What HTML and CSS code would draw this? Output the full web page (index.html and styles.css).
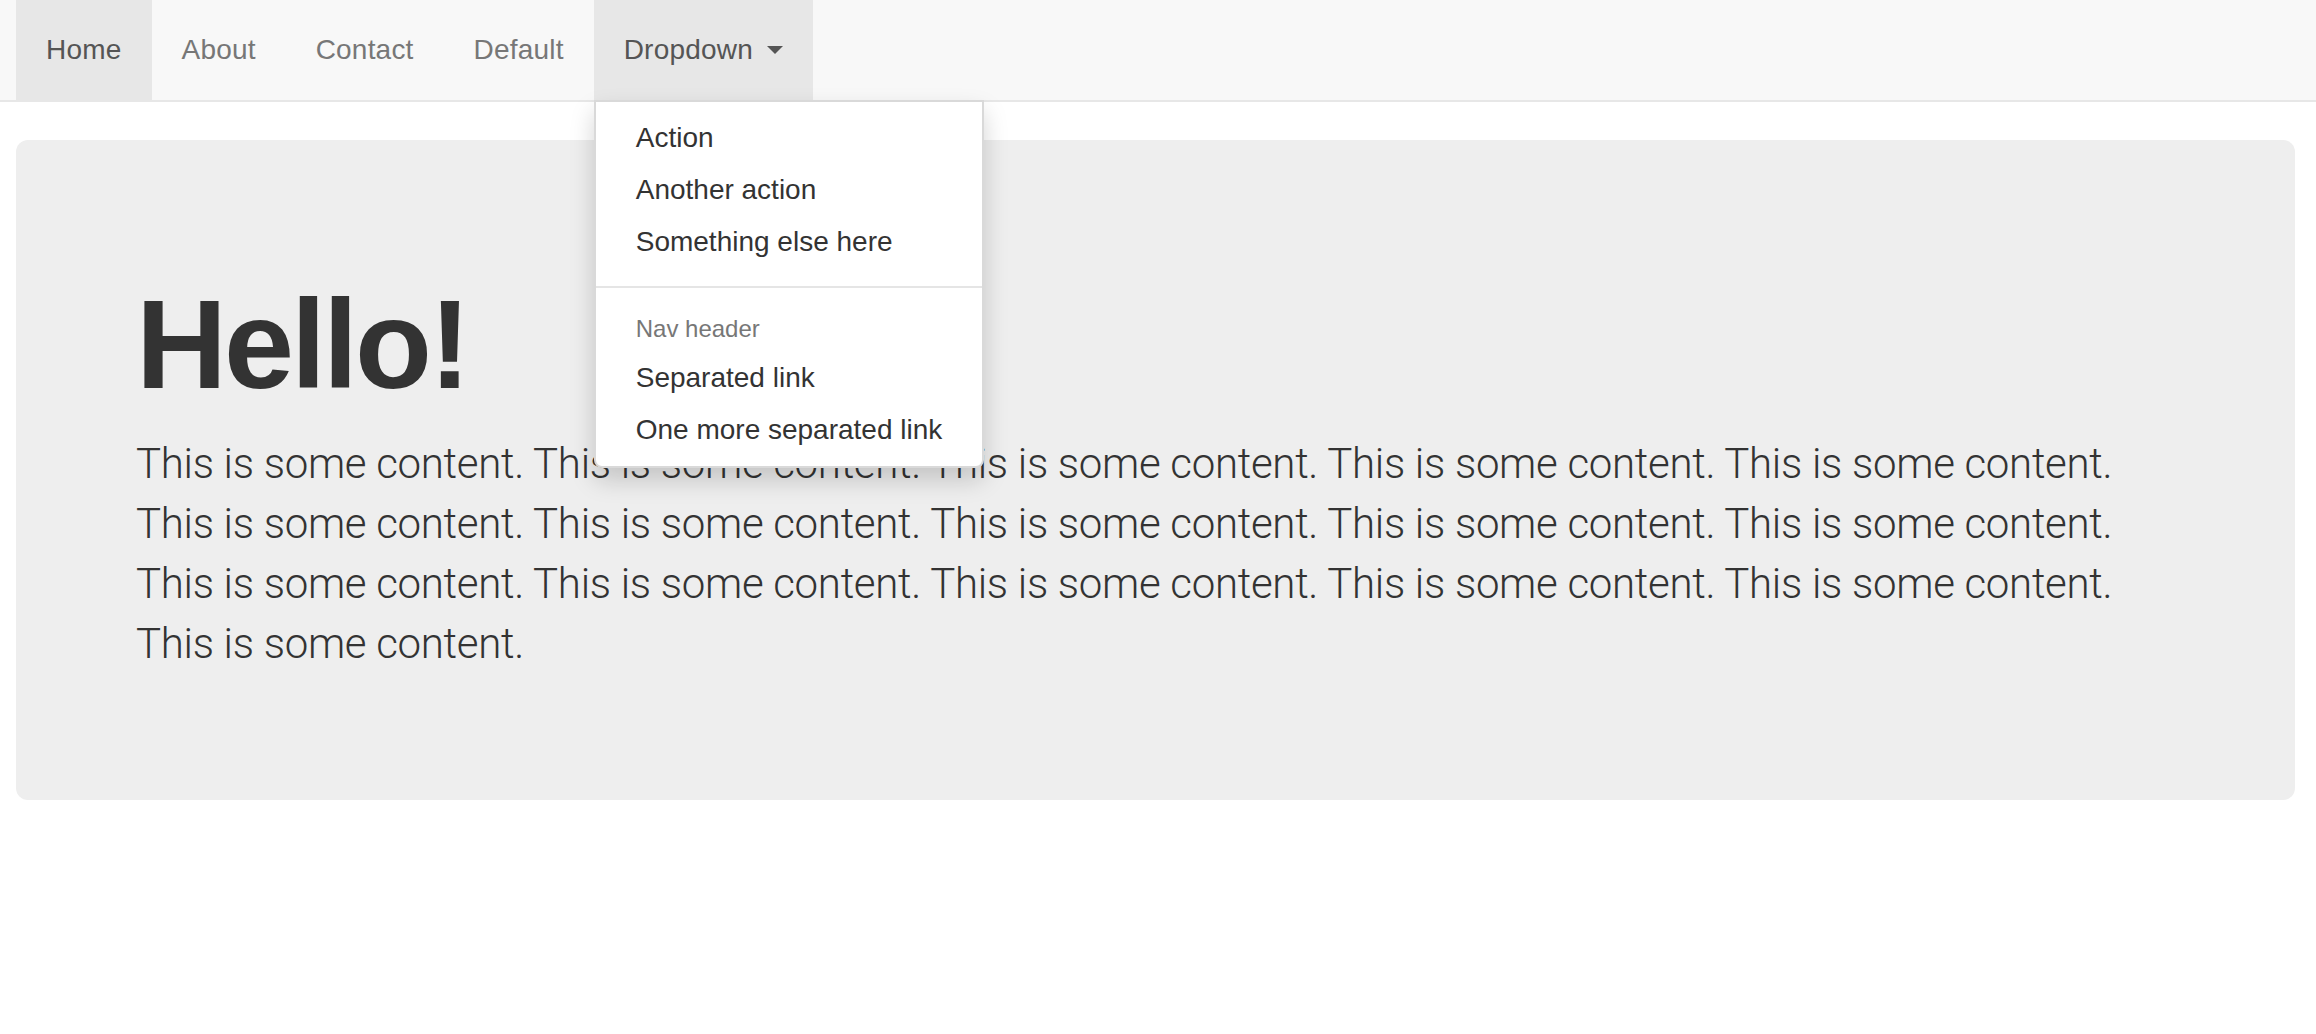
FILE: index.html
```html
<!DOCTYPE html>
<html lang="en">
<head>
<meta charset="utf-8">
<title>Hello</title>
<link rel="stylesheet" href="styles.css">
</head>
<body>
<nav class="navbar">
  <ul class="nav">
    <li class="nav-item active"><a href="#">Home</a></li>
    <li class="nav-item"><a href="#">About</a></li>
    <li class="nav-item"><a href="#">Contact</a></li>
    <li class="nav-item"><a href="#">Default</a></li>
    <li class="nav-item dropdown open">
      <a href="#">Dropdown <span class="caret"></span></a>
      <ul class="dropdown-menu">
        <li><a href="#">Action</a></li>
        <li><a href="#">Another action</a></li>
        <li><a href="#">Something else here</a></li>
        <li class="divider"></li>
        <li class="dropdown-header">Nav header</li>
        <li><a href="#">Separated link</a></li>
        <li><a href="#">One more separated link</a></li>
      </ul>
    </li>
  </ul>
</nav>
<div class="jumbotron">
  <h1>Hello!</h1>
  <p>This is some content. This is some content. This is some content. This is some content. This is some content. This is some content. This is some content. This is some content. This is some content. This is some content. This is some content. This is some content. This is some content. This is some content. This is some content. This is some content.</p>
</div>
</body>
</html>
```
FILE: styles.css
```css
* { box-sizing: border-box; }
html, body {
  margin: 0;
  padding: 0;
  background: #fff;
}
body {
  font-family: "Liberation Sans", Arial, Helvetica, sans-serif;
  color: #333;
  font-size: 28px;
  line-height: 40px;
}
a { text-decoration: none; }

.navbar {
  background: #f8f8f8;
  border-bottom: 2px solid #e7e7e7;
  padding: 0 16px;
  margin-bottom: 38px;
}
.nav {
  list-style: none;
  margin: 0;
  padding: 0;
  display: flex;
}
.nav-item { position: relative; }
.nav-item > a {
  display: block;
  padding: 30px 30px;
  line-height: 40px;
  font-size: 28px;
  letter-spacing: 0.2px;
  color: #777;
}
.nav-item.active > a,
.nav-item.open > a {
  background: #e7e7e7;
  color: #555;
}
.caret {
  display: inline-block;
  width: 0;
  height: 0;
  margin-left: 6px;
  vertical-align: middle;
  border-top: 8px solid #555;
  border-left: 8px solid transparent;
  border-right: 8px solid transparent;
  position: relative;
  top: -2px;
}
.dropdown-menu {
  position: absolute;
  top: 100%;
  left: 0;
  z-index: 10;
  list-style: none;
  margin: 0;
  padding: 10px 0;
  min-width: 320px;
  background: #fff;
  border: 2px solid rgba(0,0,0,.15);
  border-radius: 0 0 8px 8px;
  box-shadow: 0 12px 24px rgba(0,0,0,.175);
  white-space: nowrap;
}
.dropdown-menu li a {
  display: block;
  padding: 6px 40px;
  line-height: 40px;
  font-size: 28px;
  color: #333;
}
.dropdown-menu .divider {
  height: 2px;
  margin: 18px 0;
  background: #e5e5e5;
}
.dropdown-menu .dropdown-header {
  display: block;
  padding: 6px 40px;
  font-size: 24px;
  line-height: 34px;
  color: #777;
}

.jumbotron {
  margin: 0 21px 0 16px;
  padding: 96px 120px;
  background: #eee;
  border-radius: 12px;
  color: #333;
}
.jumbotron h1 {
  margin: 40px 0 20px;
  font-size: 126px;
  line-height: 138px;
  font-weight: 700;
  letter-spacing: -3px;
  color: #333;
}
.jumbotron p {
  margin: 0 0 30px;
  font-family: Roboto, "Liberation Sans", Arial, sans-serif;
  font-size: 42px;
  line-height: 60px;
  font-weight: 300;
  letter-spacing: -0.3px;
}
```
